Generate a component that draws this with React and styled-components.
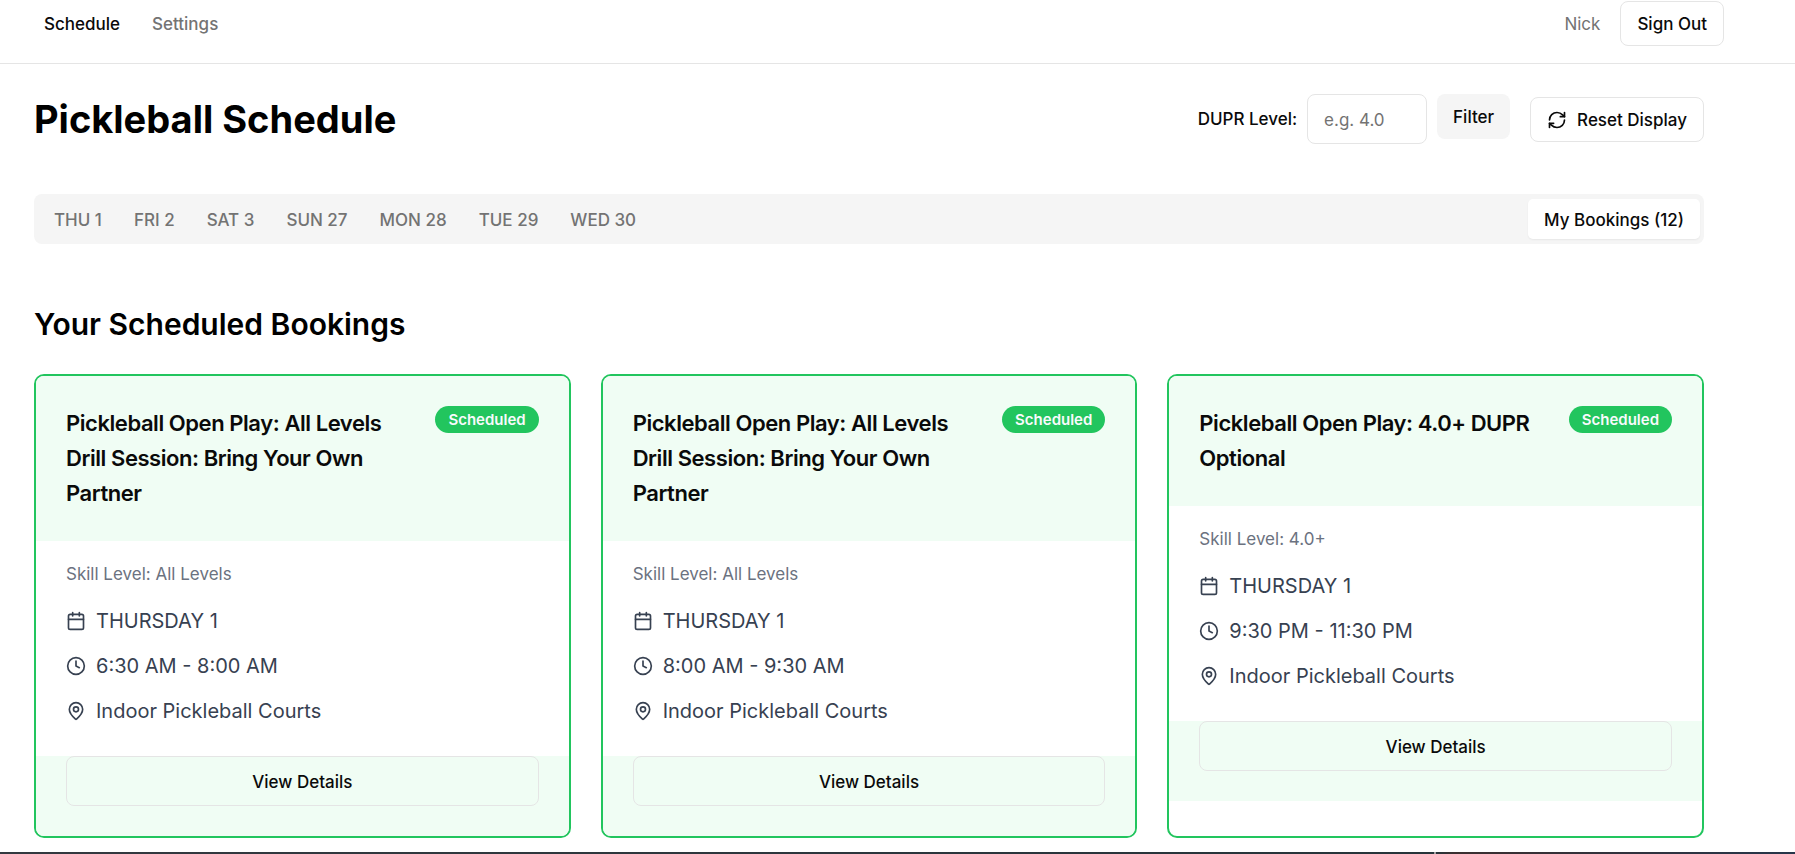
import React from 'react';
import styled, { createGlobalStyle } from 'styled-components';
import { Calendar, Clock, MapPin, RefreshCw } from 'lucide-react';

const GlobalStyle = createGlobalStyle`
  *, *::before, *::after { box-sizing: border-box; }
  body {
    margin: 0;
    background: #ffffff;
    color: #0a0a0a;
    font-family: Inter, "Liberation Sans", sans-serif;
    font-size: 17px;
    line-height: 25px;
  }
  h1, h2, h3, p, ul { margin: 0; padding: 0; }
  ul { list-style: none; }
  button, input { font: inherit; color: inherit; }
  button { cursor: pointer; }
`;

const TopBar = styled.header`
  display: flex;
  align-items: center;
  justify-content: space-between;
  padding: 1px 71px 17px 44px;
  border-bottom: 1px solid #e5e5e5;
`;

const Nav = styled.nav`
  display: flex;
  gap: 32px;
  padding-top: 2px;
`;

const NavLink = styled.a`
  font-weight: 500;
  text-decoration: none;
  color: ${({ $active }) => ($active ? '#0a0a0a' : '#737373')};
`;

const Account = styled.div`
  display: flex;
  align-items: center;
  gap: 20px;
`;

const UserName = styled.span`
  padding-top: 2px;
  color: #737373;
`;

const Button = styled.button`
  display: inline-flex;
  align-items: center;
  justify-content: center;
  gap: 10px;
  height: ${({ $large }) => ($large ? '50px' : '45px')};
  width: ${({ $block }) => ($block ? '100%' : 'auto')};
  padding: 2px 16px 0;
  border: ${({ $filled }) => ($filled ? '0' : '1px solid #e5e5e5')};
  border-radius: 8px;
  background: ${({ $filled }) => ($filled ? '#f5f5f5' : 'transparent')};
  font-weight: 500;
  white-space: nowrap;
`;

const Main = styled.main`
  padding: 30px 91px 14px 34px;
`;

const PageHead = styled.div`
  display: flex;
  align-items: center;
  justify-content: space-between;
  margin-bottom: 50px;
`;

const PageTitle = styled.h1`
  font-size: 38px;
  line-height: 45px;
  font-weight: 700;
  color: #000000;
`;

const Controls = styled.div`
  display: flex;
  align-items: center;
  gap: 20px;
`;

const FilterForm = styled.form`
  display: flex;
  align-items: flex-start;
  gap: 10px;
`;

const FilterLabel = styled.label`
  align-self: center;
  font-weight: 500;
`;

const LevelInput = styled.input`
  width: 120px;
  height: 50px;
  padding: 2px 16px 0;
  border: 1px solid #e5e5e5;
  border-radius: 8px;
  background: #ffffff;
  &::placeholder { color: #737373; opacity: 1; }
`;

const TabBar = styled.div`
  display: flex;
  align-items: center;
  height: 50px;
  padding: 5px 4px;
  margin-bottom: 60px;
  border-radius: 8px;
  background: #f5f5f5;
`;

const Tab = styled.button`
  height: 40px;
  padding: 2px 16px 0;
  border: 0;
  border-radius: 5px;
  margin-left: ${({ $end }) => ($end ? 'auto' : '0')};
  background: ${({ $active }) => ($active ? '#ffffff' : 'transparent')};
  box-shadow: ${({ $active }) => ($active ? '0 1px 2px rgba(0, 0, 0, 0.06)' : 'none')};
  color: ${({ $active }) => ($active ? '#0a0a0a' : '#737373')};
  font-weight: 500;
  white-space: nowrap;
`;

const SectionTitle = styled.h2`
  margin-bottom: 30px;
  font-size: 30px;
  line-height: 40px;
  font-weight: 600;
  color: #000000;
`;

const CardGrid = styled.div`
  display: grid;
  grid-template-columns: repeat(3, minmax(0, 1fr));
  gap: 30px;
`;

const Card = styled.article`
  overflow: hidden;
  border: 2px solid #22c55e;
  border-radius: 10px;
  background: #ffffff;
`;

const CardHead = styled.div`
  display: flex;
  align-items: flex-start;
  justify-content: space-between;
  gap: 30px;
  padding: 30px;
  background: #f0fdf4;
`;

const CardTitle = styled.h3`
  font-size: 22px;
  line-height: 35px;
  font-weight: 600;
  letter-spacing: -0.02em;
`;

const Badge = styled.span`
  flex: none;
  padding: 1px 13px;
  border-radius: 14px;
  background: #22c55e;
  color: #f8fafc;
  font-size: 15px;
  font-weight: 600;
`;

const CardBody = styled.div`
  padding: 21px 30px 30px;
`;

const Skill = styled.p`
  margin-bottom: 19px;
  color: #6b7280;
`;

const Facts = styled.ul`
  display: grid;
  gap: 15px;
  color: #374151;
`;

const Fact = styled.li`
  display: flex;
  align-items: center;
  gap: 10px;
  font-size: 20px;
  line-height: 30px;
`;

const CardFoot = styled.div`
  padding: 0 30px 30px;
  background: #f0fdf4;
`;

const BottomStrip = styled.div`
  height: 2px;
  background:
    linear-gradient(#a3a3a3, #a3a3a3) 80% 0 / 2px 2px no-repeat,
    linear-gradient(to right, #33393f, #26343a 80%, #3b2f30 81%, #26364a);
`;

const DAYS = ['THU 1', 'FRI 2', 'SAT 3', 'SUN 27', 'MON 28', 'TUE 29', 'WED 30'];

const DRILL = 'Pickleball Open Play: All Levels Drill Session: Bring Your Own Partner';

const BOOKINGS = [
  { id: 1, title: DRILL, skill: 'All Levels', time: '6:30 AM - 8:00 AM' },
  { id: 2, title: DRILL, skill: 'All Levels', time: '8:00 AM - 9:30 AM' },
  { id: 3, title: 'Pickleball Open Play: 4.0+ DUPR Optional', skill: '4.0+', time: '9:30 PM - 11:30 PM' },
];

function BookingCard({ title, skill, time }) {
  return (
    <Card>
      <CardHead>
        <CardTitle>{title}</CardTitle>
        <Badge>Scheduled</Badge>
      </CardHead>
      <CardBody>
        <Skill>Skill Level: {skill}</Skill>
        <Facts>
          <Fact><Calendar size={20} />THURSDAY 1</Fact>
          <Fact><Clock size={20} />{time}</Fact>
          <Fact><MapPin size={20} />Indoor Pickleball Courts</Fact>
        </Facts>
      </CardBody>
      <CardFoot>
        <Button type="button" $large $block>View Details</Button>
      </CardFoot>
    </Card>
  );
}

export default function App() {
  return (
    <>
      <GlobalStyle />
      <TopBar>
        <Nav>
          <NavLink href="#schedule" $active>Schedule</NavLink>
          <NavLink href="#settings">Settings</NavLink>
        </Nav>
        <Account>
          <UserName>Nick</UserName>
          <Button type="button">Sign Out</Button>
        </Account>
      </TopBar>
      <Main>
        <PageHead>
          <PageTitle>Pickleball Schedule</PageTitle>
          <Controls>
            <FilterForm onSubmit={(event) => event.preventDefault()}>
              <FilterLabel htmlFor="dupr-level">DUPR Level:</FilterLabel>
              <LevelInput id="dupr-level" placeholder="e.g. 4.0" />
              <Button type="submit" $filled>Filter</Button>
            </FilterForm>
            <Button type="button"><RefreshCw size={20} />Reset Display</Button>
          </Controls>
        </PageHead>
        <TabBar role="tablist">
          {DAYS.map((day) => (
            <Tab key={day} type="button" role="tab" aria-selected="false">{day}</Tab>
          ))}
          <Tab type="button" role="tab" aria-selected="true" $active $end>My Bookings (12)</Tab>
        </TabBar>
        <SectionTitle>Your Scheduled Bookings</SectionTitle>
        <CardGrid>
          {BOOKINGS.map(({ id, ...booking }) => (
            <BookingCard key={id} {...booking} />
          ))}
        </CardGrid>
      </Main>
      <BottomStrip />
    </>
  );
}
